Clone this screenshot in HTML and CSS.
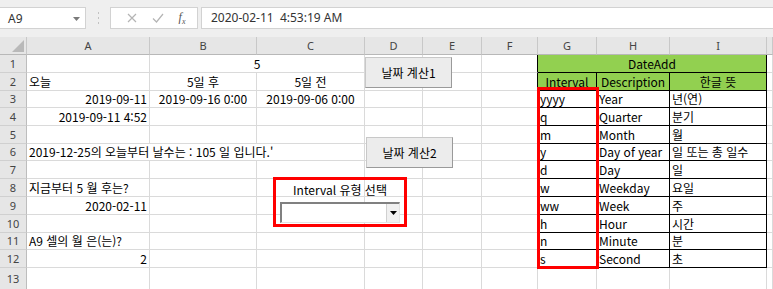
FILE: index.html
```html
<!DOCTYPE html>
<html lang="ko">
<head>
  <meta charset="UTF-8">
  <title>DateAdd</title>
  <link rel="stylesheet" href="styles.css">
</head>
<body>
  <div class="toolbar">
    <div class="namebox">
      <span>A9</span>
      <svg class="nb-arrow" width="7" height="4" viewBox="0 0 7 4"><polygon points="0,0 7,0 3.5,4" fill="#7a7a7a"/></svg>
    </div>
    <div class="grip">
      <svg width="3" height="12" viewBox="0 0 3 12"><rect x="1" y="0" width="1" height="2" fill="#c2c2c2"/><rect x="1" y="5" width="1" height="2" fill="#c2c2c2"/><rect x="1" y="10" width="1" height="2" fill="#c2c2c2"/></svg>
    </div>
    <div class="fxbox">
      <svg width="10" height="10" viewBox="0 0 10 10"><path d="M1 1 L9 9 M9 1 L1 9" stroke="#b4b4b4" stroke-width="1.2" fill="none"/></svg>
      <svg width="12" height="10" viewBox="0 0 12 10"><path d="M1 5.5 L4.5 9 L11 1" stroke="#b4b4b4" stroke-width="1.2" fill="none"/></svg>
      <span class="fx">f<sub>x</sub></span>
    </div>
    <div class="formula">2020-02-11  4:53:19 AM</div>
  </div>

  <div class="sheet">
    <div class="row head">
      <div class="corner"><svg width="12" height="12" viewBox="0 0 12 12"><polygon points="12,0 12,12 0,12" fill="#b9b9b9"/></svg></div>
      <div>A</div><div>B</div><div>C</div><div>D</div><div>E</div><div>F</div><div>G</div><div>H</div><div>I</div><div></div>
    </div>

    <div class="row">
      <div class="rh">1</div>
      <div></div><div class="ctr span2">5</div><div></div><div></div><div class="tl"></div>
      <div class="t g ctr span3">DateAdd</div><div></div>
    </div>
    <div class="row">
      <div class="rh">2</div>
      <div>오늘</div><div class="ctr">5일 후</div><div class="ctr">5일 전</div><div></div><div></div><div class="tl"></div>
      <div class="t g ctr">Interval</div><div class="t g ctr">Description</div><div class="t g ctr">한글 뜻</div><div></div>
    </div>
    <div class="row h17">
      <div class="rh">3</div>
      <div class="r">2019-09-11</div><div class="ctr">2019-09-16 0:00</div><div class="ctr">2019-09-06 0:00</div><div></div><div></div><div class="tl"></div>
      <div class="t">yyyy</div><div class="t">Year</div><div class="t">년(연)</div><div></div>
    </div>
    <div class="row">
      <div class="rh">4</div>
      <div class="r">2019-09-11 4:52</div><div></div><div></div><div></div><div></div><div class="tl"></div>
      <div class="t">q</div><div class="t">Quarter</div><div class="t">분기</div><div></div>
    </div>
    <div class="row">
      <div class="rh">5</div>
      <div></div><div></div><div></div><div></div><div></div><div class="tl"></div>
      <div class="t">m</div><div class="t">Month</div><div class="t">월</div><div></div>
    </div>
    <div class="row h17">
      <div class="rh">6</div>
      <div class="span3">2019-12-25의 오늘부터 날수는 : 105 일 입니다.'</div><div></div><div></div><div class="tl"></div>
      <div class="t">y</div><div class="t">Day of year</div><div class="t">일 또는 총 일수</div><div></div>
    </div>
    <div class="row">
      <div class="rh">7</div>
      <div></div><div></div><div></div><div></div><div></div><div class="tl"></div>
      <div class="t">d</div><div class="t">Day</div><div class="t">일</div><div></div>
    </div>
    <div class="row">
      <div class="rh">8</div>
      <div>지금부터 5 월 후는?</div><div></div><div></div><div></div><div></div><div class="tl"></div>
      <div class="t">w</div><div class="t">Weekday</div><div class="t">요일</div><div></div>
    </div>
    <div class="row">
      <div class="rh">9</div>
      <div class="r">2020-02-11</div><div></div><div></div><div></div><div></div><div class="tl"></div>
      <div class="t">ww</div><div class="t">Week</div><div class="t">주</div><div></div>
    </div>
    <div class="row">
      <div class="rh">10</div>
      <div></div><div></div><div></div><div></div><div></div><div class="tl"></div>
      <div class="t">h</div><div class="t">Hour</div><div class="t">시간</div><div></div>
    </div>
    <div class="row h17">
      <div class="rh">11</div>
      <div>A9 셀의 월 은(는)?</div><div></div><div></div><div></div><div></div><div class="tl"></div>
      <div class="t">n</div><div class="t">Minute</div><div class="t">분</div><div></div>
    </div>
    <div class="row">
      <div class="rh">12</div>
      <div class="r">2</div><div></div><div></div><div></div><div></div><div class="tl"></div>
      <div class="t">s</div><div class="t">Second</div><div class="t">초</div><div></div>
    </div>
    <div class="row h22">
      <div class="rh">13</div>
      <div></div><div></div><div></div><div></div><div></div><div></div>
      <div></div><div></div><div></div><div></div>
    </div>

    <!-- floating form controls -->
    <button class="btn btn1">날짜 계산1</button>
    <button class="btn btn2">날짜 계산2</button>

    <div class="combo-group">
      <div class="combo-label">Interval 유형 선택</div>
      <div class="combo">
        <div class="combo-drop"><svg width="7" height="4" viewBox="0 0 7 4"><polygon points="0,0 7,0 3.5,4" fill="#000"/></svg></div>
      </div>
    </div>

    <div class="mark-g"></div>
  </div>
</body>
</html>
```

FILE: styles.css
```css
body {
  margin: 0;
  width: 773px;
  height: 289px;
  overflow: hidden;
  background: #fff;
  font-family: "Noto Sans CJK KR", sans-serif;
  font-size: 12px;
  color: #000;
}

/* formula bar */
.toolbar {
  height: 37px;
  background: #efefef;
  display: flex;
  align-items: flex-start;
  padding-top: 7px;
  box-sizing: border-box;
}
.namebox {
  width: 86px;
  height: 22px;
  background: #fff;
  border: 1px solid #d2d2d2;
  border-left: none;
  box-sizing: border-box;
  display: flex;
  align-items: center;
  justify-content: space-between;
  padding: 0 5px 0 8px;
  font-family: "Noto Sans", sans-serif;
  font-size: 12px;
  color: #333;
}
.nb-arrow {
  margin-top: 1px;
}
.grip {
  width: 24px;
  height: 22px;
  display: flex;
  align-items: center;
  justify-content: center;
}
.fxbox {
  width: 88px;
  height: 22px;
  background: #fff;
  border: 1px solid #d2d2d2;
  box-sizing: border-box;
  display: flex;
  align-items: center;
  justify-content: space-around;
  padding: 0 4px 0 8px;
}
.fx {
  font-family: "Liberation Serif", serif;
  font-style: italic;
  font-size: 12px;
  color: #555;
}
.fx sub {
  font-size: 8px;
}
.formula {
  flex: 1;
  height: 22px;
  margin-left: 3px;
  background: #fff;
  border: 1px solid #d2d2d2;
  border-right: none;
  box-sizing: border-box;
  padding-left: 9px;
  line-height: 20px;
  white-space: pre;
  font-family: "Noto Sans", sans-serif;
  font-size: 12px;
  color: #333;
}

/* grid */
.sheet {
  position: relative;
}
.row {
  display: grid;
  grid-template-columns: 27px 123px 107px 108px 58px 59px 56px 59px 73px 97px 1fr;
  height: 18px;
}
.row.h17 {
  height: 17px;
}
.row.h22 {
  height: 22px;
}
.row > div {
  box-sizing: border-box;
  border-right: 1px solid #dadada;
  border-bottom: 1px solid #dadada;
  padding: 0 2px;
  white-space: nowrap;
  overflow: hidden;
  display: flex;
  align-items: flex-end;
  line-height: 16px;
}
.row > .r {
  justify-content: flex-end;
}
.row > .ctr {
  justify-content: center;
}
.span2 {
  grid-column: span 2;
}
.span3 {
  grid-column: span 3;
}

.head > div {
  background: #e6e6e6;
  border-right: 1px solid #c8c8c8;
  border-bottom: 1px solid #b8b8b8;
  justify-content: center;
  align-items: center;
  color: #444;
  font-family: "Noto Sans", sans-serif;
  font-size: 11px;
}
.head > .corner {
  justify-content: flex-end;
  align-items: flex-end;
  padding: 0 2px 2px 0;
}
.row > .rh {
  background: #e6e6e6;
  border-right: 1px solid #bdbdbd;
  border-bottom: 1px solid #d0d0d0;
  justify-content: center;
  align-items: center;
  color: #444;
  font-family: "Noto Sans", sans-serif;
  font-size: 11px;
}

/* DateAdd table */
.row > .tl {
  border-right-color: #000;
}
.row > .t {
  border-right-color: #000;
  border-bottom-color: #000;
}
.row > .g {
  background: #92d050;
}

/* form controls */
.btn {
  position: absolute;
  width: 87px;
  height: 31px;
  background: #ececec;
  border: 1px solid #c8c8c8;
  border-right-color: #9a9a9a;
  border-bottom-color: #9a9a9a;
  font-family: "Noto Sans CJK KR", sans-serif;
  font-size: 12px;
  color: #000;
  padding: 0;
}
.btn1 {
  left: 365px;
  top: 20px;
}
.btn2 {
  left: 366px;
  top: 100px;
}

.combo-group {
  position: absolute;
  left: 273px;
  top: 140px;
  width: 134px;
  height: 50px;
  border: 3px solid #ff0000;
  box-sizing: border-box;
  display: flex;
  flex-direction: column;
  align-items: flex-start;
}
.combo-label {
  align-self: center;
  height: 22px;
  line-height: 20px;
  font-size: 12px;
}
.combo {
  margin-left: 4px;
  width: 120px;
  height: 21px;
  box-sizing: border-box;
  background: #fff;
  border: 1px solid #e3e3e3;
  border-top: 2px solid #808080;
  border-left: 2px solid #808080;
  display: flex;
  justify-content: flex-end;
}
.combo-drop {
  width: 12px;
  background: #f0f0f0;
  border-left: 1px solid #d0d0d0;
  display: flex;
  align-items: center;
  justify-content: center;
}

.mark-g {
  position: absolute;
  left: 537px;
  top: 50px;
  width: 62px;
  height: 182px;
  border: 3px solid #ff0000;
  box-sizing: border-box;
}
```
